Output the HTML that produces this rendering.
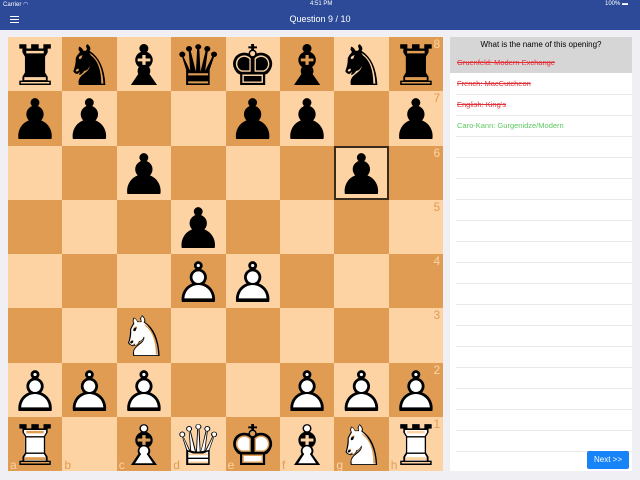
<!DOCTYPE html>
<html><head><meta charset="utf-8"><style>
*{margin:0;padding:0;box-sizing:border-box}
body{width:640px;height:480px;background:#efeff4;font-family:"Liberation Sans","DejaVu Sans",sans-serif;position:relative;overflow:hidden}
.nav{position:absolute;left:0;top:0;width:640px;height:30px;background:#2c4a98;color:#fff}
.sb{position:absolute;top:1px;font-size:6px;color:#fff}
.title{position:absolute;top:14px;width:640px;text-align:center;font-size:9px}
.board{position:absolute;left:8px;top:37px;width:435px;height:434px;overflow:hidden}
.sq{position:absolute;width:54.4px;height:54.25px;overflow:hidden}
.l{background:#fdd3a4}.d{background:#e09c52}
.p{position:absolute;left:-10px;top:0;width:74px;height:100%;text-align:center;font-family:"DejaVu Sans",sans-serif;font-size:56px;line-height:60px}
.b{color:#000}
.w{color:#fff}
.rk{position:absolute;right:3px;top:0px;font-size:12px}
.fl{position:absolute;left:2px;bottom:-1px;font-size:12px}
.panel{position:absolute;left:450px;top:37px;width:182px;height:434px;background:#fff}
.hd{height:36px;background:#d6d6d6}
.q{font-size:8px;text-align:center;padding-top:3px;color:#000}
.it{position:absolute;left:7px;font-size:7.5px}
.ln{position:absolute;left:6px;right:0;height:1px;background:#e9e9ee}
.next{position:absolute;left:587px;top:451px;width:42px;height:18px;background:#1683f7;color:#fff;font-size:8px;text-align:center;line-height:18px;border-radius:2px}
</style></head><body>
<div class="nav">
<div class="sb" style="left:3px">Carrier ◠</div>
<div class="sb" style="left:310px">4:51 PM</div>
<div class="sb" style="left:605px">100% ▬</div>
<div style="position:absolute;left:10px;top:16px;width:9px;height:1.3px;background:#fff;box-shadow:0 3px 0 #fff,0 6px 0 #fff"></div>
<div class="title">Question 9 / 10</div>
</div>
<div class="board" id="b"></div>
<div class="panel">
<div class="hd"><div class="q">What is the name of this opening?</div></div>
<div class="it" style="top:21px;color:#e0303a;text-decoration:line-through">Gruenfeld: Modern Exchange</div>
<div class="it" style="top:42px;color:#e0303a;text-decoration:line-through">French: MacCutcheon</div>
<div class="it" style="top:63px;color:#e0303a;text-decoration:line-through">English: King's</div>
<div class="it" style="top:84px;color:#5cc860">Caro-Kann: Gurgenidze/Modern</div>
<div id="lines"></div>
</div>
<div class="next">Next &gt;&gt;</div>
<script>
var pos=["rnbqkbnr","pp..pp.p","..p...p.","...p....","...PP...","..N.....","PPP..PPP","R.BQKBNR"];
var g={k:"♚",q:"♛",r:"♜",b:"♝",n:"♞",p:"♟"};
var o={k:"♔",q:"♕",r:"♖",b:"♗",n:"♘",p:"♙"};
var h="";
for(var r=0;r<8;r++)for(var c=0;c<8;c++){
var lt=(r+c)%2==0;var ch=pos[r][c];
h+='<div class="sq '+(lt?'l':'d')+'" style="left:'+(c*54.4)+'px;top:'+(r*54.25)+'px">';
if(ch!='.'){var lo=ch.toLowerCase();
if(ch==lo)h+='<div class="p b">'+g[lo]+'</div>';
else h+='<div class="p w">'+g[lo]+'</div><div class="p b">'+o[lo]+'</div>';}
if(c==7)h+='<div class="rk" style="color:'+(lt?'#e09c52':'#fdd3a4')+'">'+(8-r)+'</div>';
if(r==7)h+='<div class="fl" style="color:'+(lt?'#e09c52':'#fdd3a4')+'">'+"abcdefgh"[c]+'</div>';
if(r==2&&c==6)h+='<div style="position:absolute;inset:0;border:2px solid #3a2a1a"></div>';
h+='</div>';}
document.getElementById('b').innerHTML=h;
var L="";for(var y=57;y<420;y+=21)L+='<div class="ln" style="top:'+y+'px"></div>';
document.getElementById('lines').innerHTML=L;
</script>
</body></html>
